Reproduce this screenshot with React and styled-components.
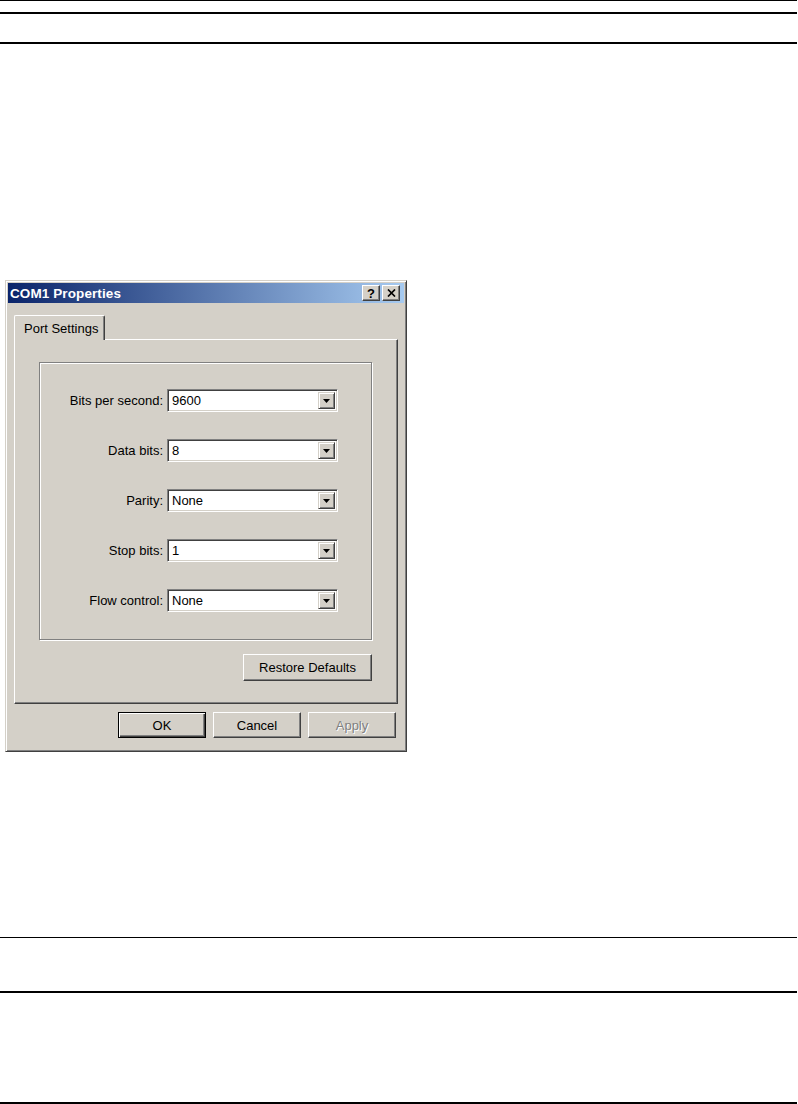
import React from "react";
import styled, { createGlobalStyle, css } from "styled-components";

const GlobalStyle = createGlobalStyle`
  html, body {
    margin: 0;
    padding: 0;
    background: #fff;
  }
  body {
    font-family: "Liberation Sans", Arial, sans-serif;
  }
`;

const face = "#d4d0c8";

const raised = css`
  border: 1px solid;
  border-color: #fff #404040 #404040 #fff;
  box-shadow: inset -1px -1px #808080, inset 1px 1px ${face};
`;

const SETTINGS = [
  { label: "Bits per second:", value: "9600" },
  { label: "Data bits:", value: "8" },
  { label: "Parity:", value: "None" },
  { label: "Stop bits:", value: "1" },
  { label: "Flow control:", value: "None" },
];

const DownArrow = () => (
  <svg width="7" height="4" viewBox="0 0 7 4">
    <path d="M0 0h7L3.5 4z" fill="#000" />
  </svg>
);

const CloseGlyph = () => (
  <svg width="9" height="8" viewBox="0 0 9 8">
    <path d="M1 0.5l7 7M8 0.5l-7 7" stroke="#000" strokeWidth="1.7" />
  </svg>
);

const Combo = ({ value }) => (
  <Styled.Combo>
    <Styled.ComboValue>{value}</Styled.ComboValue>
    <Styled.ComboButton>
      <DownArrow />
    </Styled.ComboButton>
  </Styled.Combo>
);

const PropertiesDialog = () => (
  <Styled.Window>
    <Styled.TitleBar>
      <Styled.Title>COM1 Properties</Styled.Title>
      <Styled.CaptionButtons>
        <Styled.CaptionButton>?</Styled.CaptionButton>
        <Styled.CaptionButton>
          <CloseGlyph />
        </Styled.CaptionButton>
      </Styled.CaptionButtons>
    </Styled.TitleBar>
    <Styled.Body>
      <Styled.TabStrip>
        <Styled.Tab>Port Settings</Styled.Tab>
      </Styled.TabStrip>
      <Styled.TabPanel>
        <Styled.GroupBox>
          {SETTINGS.map((row) => (
            <Styled.Row key={row.label}>
              <Styled.Label>{row.label}</Styled.Label>
              <Combo value={row.value} />
            </Styled.Row>
          ))}
        </Styled.GroupBox>
        <Styled.PanelFooter>
          <Styled.Button $width={129}>Restore Defaults</Styled.Button>
        </Styled.PanelFooter>
      </Styled.TabPanel>
      <Styled.ButtonRow>
        <Styled.Button $default>OK</Styled.Button>
        <Styled.Button>Cancel</Styled.Button>
        <Styled.Button $disabled>Apply</Styled.Button>
      </Styled.ButtonRow>
    </Styled.Body>
  </Styled.Window>
);

const App = () => (
  <>
    <GlobalStyle />
    <Styled.Page>
      <Styled.Rule $top={0} $weight={1} />
      <Styled.Rule $top={11} $weight={2} />
      <Styled.Rule $top={28} $weight={2} />
      <Styled.Figure>
        <PropertiesDialog />
      </Styled.Figure>
      <Styled.Rule $top={185} $weight={1} />
      <Styled.Rule $top={53} $weight={2} />
      <Styled.Rule $top={109} $weight={2} />
    </Styled.Page>
  </>
);

const Styled = {
  Page: styled.div`
    width: 798px;
    height: 1104px;
    display: flex;
    flex-direction: column;
    background: #fff;
    overflow: hidden;
  `,
  Rule: styled.div`
    margin: ${(p) => p.$top}px 1px 0 0;
    height: ${(p) => p.$weight}px;
    background: #000;
    flex-shrink: 0;
  `,
  Figure: styled.div`
    margin-top: 236px;
    padding-left: 5px;
    display: flex;
  `,
  Window: styled.div`
    width: 402px;
    box-sizing: border-box;
    background: ${face};
    border: 1px solid;
    border-color: ${face} #404040 #404040 ${face};
    box-shadow: inset 1px 1px #fff, inset -1px -1px #808080;
    padding: 2px;
    display: flex;
    flex-direction: column;
    font-size: 13px;
    color: #000;
  `,
  TitleBar: styled.div`
    height: 20px;
    display: flex;
    align-items: center;
    justify-content: space-between;
    padding: 0 4px 0 2px;
    background: linear-gradient(to right, #0a246a, #a6caf0);
  `,
  Title: styled.span`
    color: #fff;
    font-weight: bold;
    font-size: 13.5px;
    letter-spacing: 0.1px;
  `,
  CaptionButtons: styled.div`
    display: flex;
    gap: 2px;
  `,
  CaptionButton: styled.div`
    width: 18px;
    height: 16px;
    box-sizing: border-box;
    background: ${face};
    ${raised};
    display: flex;
    align-items: center;
    justify-content: center;
    font-weight: bold;
    font-size: 13px;
    line-height: 1;
  `,
  Body: styled.div`
    padding: 12px 6px 11px;
    display: flex;
    flex-direction: column;
  `,
  TabStrip: styled.div`
    display: flex;
  `,
  Tab: styled.div`
    position: relative;
    z-index: 1;
    width: 91px;
    height: 25px;
    box-sizing: border-box;
    margin-bottom: -1px;
    background: ${face};
    border-top: 1px solid #fff;
    border-left: 1px solid #fff;
    border-right: 1px solid #404040;
    box-shadow: inset -1px 0 #808080;
    border-radius: 2px 2px 0 0;
    display: flex;
    align-items: center;
    padding-left: 9px;
  `,
  TabPanel: styled.div`
    height: 365px;
    box-sizing: border-box;
    border: 1px solid;
    border-color: #fff #404040 #404040 #fff;
    box-shadow: inset -1px -1px #808080;
    padding: 22px 25px 22px 24px;
    display: flex;
    flex-direction: column;
  `,
  GroupBox: styled.div`
    height: 278px;
    box-sizing: border-box;
    border: 1px solid #808080;
    box-shadow: inset 1px 1px #fff, 1px 1px #fff;
    padding: 26px 0 27px;
    display: flex;
    flex-direction: column;
    gap: 27px;
  `,
  Row: styled.div`
    display: grid;
    grid-template-columns: 123px 171px;
    column-gap: 4px;
    align-items: center;
  `,
  Label: styled.span`
    text-align: right;
    white-space: nowrap;
  `,
  Combo: styled.div`
    height: 23px;
    box-sizing: border-box;
    background: #fff;
    border: 1px solid;
    border-color: #808080 #fff #fff #808080;
    box-shadow: inset 1px 1px #404040, inset -1px -1px ${face};
    padding: 2px;
    display: flex;
    align-items: stretch;
  `,
  ComboValue: styled.span`
    flex: 1;
    padding-left: 2px;
    display: flex;
    align-items: center;
  `,
  ComboButton: styled.div`
    width: 17px;
    box-sizing: border-box;
    background: ${face};
    border: 1px solid;
    border-color: ${face} #404040 #404040 ${face};
    box-shadow: inset 1px 1px #fff, inset -1px -1px #808080;
    display: flex;
    align-items: center;
    justify-content: center;
  `,
  PanelFooter: styled.div`
    margin-top: 14px;
    display: flex;
    justify-content: flex-end;
  `,
  ButtonRow: styled.div`
    margin-top: 8px;
    padding-right: 2px;
    display: flex;
    justify-content: flex-end;
    gap: 7px;
  `,
  Button: styled.div`
    width: ${(p) => p.$width || 88}px;
    height: ${(p) => (p.$width ? 27 : 26)}px;
    box-sizing: border-box;
    background: ${face};
    display: flex;
    align-items: center;
    justify-content: center;
    ${(p) =>
      p.$default
        ? css`
            border: 1px solid #000;
            box-shadow: inset 1px 1px #fff, inset -1px -1px #404040,
              inset -2px -2px #808080;
          `
        : raised}
    ${(p) =>
      p.$disabled &&
      css`
        color: #808080;
        text-shadow: 1px 1px #fff;
      `}
  `,
};

export default App;
